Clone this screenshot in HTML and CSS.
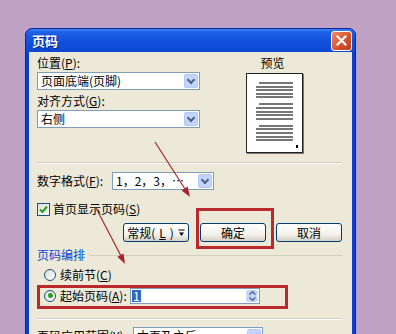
FILE: index.html
```html
<!DOCTYPE html>
<html>
  <head>
    <title>页码</title>
    <meta charset="utf-8">
    <link rel="stylesheet" href="styles.css">
  </head>
  <body>
    <div class="dialog">
      <div class="titlebar">
        <span class="title">页码</span>
        <span class="close">
          <svg width="11" height="11" viewBox="0 0 11 11"><path d="M1.5 1.5 L9.5 9.5 M9.5 1.5 L1.5 9.5" stroke="#fff" stroke-width="2.2" stroke-linecap="square"/></svg>
        </span>
      </div>
      <div class="body">
        <div class="top">
          <div class="fields">
            <div class="lbl">位置(<u>P</u>):</div>
            <div class="combo"><span class="val">页面底端(页脚)</span><i class="drop"></i></div>
            <div class="lbl gap">对齐方式(<u>G</u>):</div>
            <div class="combo"><span class="val">右侧</span><i class="drop"></i></div>
          </div>
          <div class="preview">
            <div class="pv-label">预览</div>
            <div class="page">
              <div class="para"><b class="first"></b><b></b><b></b><b></b><b></b></div>
              <div class="para"><b class="first"></b><b></b><b></b><b></b><b></b></div>
              <div class="para"><b class="first"></b><b></b><b></b><b></b><b></b></div>
              <i class="pnum"></i>
            </div>
          </div>
        </div>

        <div class="sep"></div>

        <div class="num-row">
          <span>数字格式(<u>F</u>):</span>
          <div class="combo"><span class="val">1，2，3，…</span><i class="drop"></i></div>
        </div>

        <div class="check-row">
          <span class="check">
            <svg width="9" height="9" viewBox="0 0 9 9"><path d="M1 4.5 L3.5 7 L8 1.5" fill="none" stroke="#21a121" stroke-width="2"/></svg>
          </span>
          <span>首页显示页码(<u>S</u>)</span>
        </div>

        <div class="buttons">
          <span class="btn first">常规(<u>L</u>)
            <svg width="7" height="8" viewBox="0 0 7 8"><path d="M0.5 1h6" stroke="#000"/><path d="M1 3.5h5l-2.5 3.5z" fill="#000"/></svg>
          </span>
          <span class="btn">确定</span>
          <span class="btn">取消</span>
        </div>

        <div class="group">页码编排</div>

        <div class="radio-row">
          <span class="radio"></span>
          <span>续前节(<u>C</u>)</span>
        </div>

        <div class="radio-row start">
          <span class="radio on"></span>
          <span class="start-lbl">起始页码(<u>A</u>):</span>
          <div class="spin">
            <span class="spin-val"><em>1</em></span>
            <span class="spin-btns">
              <i><svg width="7" height="4" viewBox="0 0 7 4"><path d="M0.5 3.5 L3.5 0.8 L6.5 3.5" fill="none" stroke="#4d6185" stroke-width="1.4"/></svg></i>
              <i><svg width="7" height="4" viewBox="0 0 7 4"><path d="M0.5 0.5 L3.5 3.2 L6.5 0.5" fill="none" stroke="#4d6185" stroke-width="1.4"/></svg></i>
            </span>
          </div>
        </div>

        <div class="sep low"></div>

        <div class="range-row">
          <span>页码应用范围(<u>Y</u>):</span>
          <div class="combo"><span class="val">本页及之后</span><i class="drop"></i></div>
        </div>
      </div>
    </div>

    <!-- annotations drawn over the dialog -->
    <div class="mark mark-ok"></div>
    <div class="mark mark-start"></div>
    <svg class="arrows" width="396" height="334" viewBox="0 0 396 334">
      <g stroke="#a8262a" stroke-width="1.2" fill="#a8262a">
        <line x1="155" y1="142" x2="185" y2="189"/>
        <polygon points="190,197 181.6,190.6 187.6,186.6" stroke="none"/>
        <line x1="96" y1="208" x2="121" y2="256"/>
        <polygon points="125,264 117.3,256.8 123.5,253.4" stroke="none"/>
      </g>
    </svg>
  </body>
</html>
```

FILE: styles.css
```css
* {
  box-sizing: border-box;
}
html, body {
  margin: 0;
}
body {
  position: relative;
  width: 396px;
  height: 334px;
  overflow: hidden;
  background: #bfa2c3;
  font-family: "Noto Sans CJK SC", "Liberation Sans", sans-serif;
  font-size: 12px;
  color: #000;
}
u {
  text-decoration: underline;
}

/* window frame */
.dialog {
  position: absolute;
  left: 25px;
  top: 28px;
  width: 331px;
  height: 330px;
  display: flex;
  flex-direction: column;
  background: #0b3dd0;
  border: 1px solid #0a2596;
  border-radius: 7px 7px 0 0;
  overflow: hidden;
}
.titlebar {
  display: flex;
  align-items: center;
  height: 23px;
  padding: 0 3px 0 6px;
  background: linear-gradient(#3f86f4 0, #1d60e6 3px, #1352dc 50%, #0c48d0 100%);
}
.title {
  color: #fff;
  font-weight: bold;
  font-size: 13px;
  letter-spacing: 0;
  text-shadow: 1px 1px 0 #0a2a8a;
}
.close {
  display: flex;
  align-items: center;
  justify-content: center;
  width: 21px;
  height: 20px;
  margin-left: auto;
  border: 1px solid #fff;
  border-radius: 3px;
  background: linear-gradient(135deg, #f08a62, #d4502c 60%, #b8401f);
}
.body {
  flex: 1;
  margin: 0 3px 0 3px;
  padding: 4px 10px 0 8px;
  background: #ece9d8;
  display: flex;
  flex-direction: column;
}

/* top part */
.top {
  display: flex;
}
.fields {
  width: 163px;
}
.lbl {
  height: 14px;
  line-height: 14px;
}
.lbl.gap {
  margin-top: 4px;
}
.combo {
  position: relative;
  display: flex;
  align-items: center;
  height: 18px;
  margin-top: 2px;
  padding-left: 3px;
  background: #fff;
  border: 1px solid #7f9db9;
  line-height: 14px;
  white-space: nowrap;
  overflow: hidden;
}
.drop {
  position: absolute;
  right: 1px;
  top: 1px;
  bottom: 1px;
  width: 14px;
  border-radius: 2px;
  background: #c3d5fc;
  border: 1px solid #b1c7f5;
}
.drop::after {
  content: "";
  position: absolute;
  left: 3px;
  top: 2px;
  width: 4px;
  height: 4px;
  border-right: 2px solid #4d6185;
  border-bottom: 2px solid #4d6185;
  transform: rotate(45deg);
}
.preview {
  margin-left: 46px;
  width: 59px;
}
.pv-label {
  height: 14px;
  line-height: 14px;
  padding-right: 6px;
  text-align: center;
}
.page {
  position: relative;
  width: 57px;
  height: 80px;
  margin-top: 3px;
  padding: 8px 9px 0 9px;
  background: #fff;
  border: 1px solid #222;
  box-shadow: 1px 1px 0 #777;
}
.para {
  display: flex;
  flex-direction: column;
  gap: 1.6px;
  margin-bottom: 5px;
}
.para b {
  display: block;
  height: 2px;
  background: #777;
}
.para b.first {
  margin-left: 3px;
}
.pnum {
  position: absolute;
  right: 4px;
  bottom: 4px;
  width: 2px;
  height: 3px;
  background: #000;
}

.sep {
  margin-top: 9px;
  height: 2px;
  border-top: 1px solid #d0cdbd;
  border-bottom: 1px solid #fff;
}
.sep.low {
  margin-top: 14px;
}

.num-row {
  display: grid;
  grid-template-columns: 75px 102px;
  align-items: center;
  margin-top: 8px;
  line-height: 14px;
}
.num-row .combo {
  margin-top: 0;
}

.check-row {
  display: flex;
  align-items: center;
  gap: 3px;
  height: 14px;
  margin-top: 12px;
  line-height: 14px;
}
.check {
  display: flex;
  align-items: center;
  justify-content: center;
  width: 13px;
  height: 13px;
  background: linear-gradient(135deg, #dcdcd7, #fff);
  border: 1px solid #1c5180;
}

.buttons {
  display: flex;
  justify-content: flex-end;
  gap: 10px;
  margin-top: 7px;
}
.btn {
  display: flex;
  align-items: center;
  justify-content: center;
  gap: 4px;
  width: 66px;
  height: 19px;
  border: 1px solid #003c74;
  border-radius: 3px;
  background: linear-gradient(#fff, #f3f2ec 60%, #d6d0c5);
  line-height: 14px;
}
.btn.first {
  margin-right: 1px;
}

.group {
  display: flex;
  align-items: center;
  gap: 4px;
  height: 14px;
  margin-top: 6px;
  line-height: 14px;
  color: #0046d5;
}
.group::after {
  content: "";
  flex: 1;
  border-top: 1px solid #d0d0bf;
}

.radio-row {
  display: flex;
  align-items: center;
  gap: 4px;
  height: 14px;
  margin-top: 6px;
  padding-left: 7px;
  line-height: 14px;
}
.radio {
  position: relative;
  width: 12px;
  height: 12px;
  border: 1px solid #1c5180;
  border-radius: 50%;
  background: linear-gradient(135deg, #dcdcd7, #fff);
}
.radio.on::after {
  content: "";
  position: absolute;
  left: 2.5px;
  top: 2.5px;
  width: 5px;
  height: 5px;
  border-radius: 50%;
  background: #21a121;
}
.radio-row.start {
  height: 17px;
  margin-top: 5px;
  gap: 0;
}
.start-lbl {
  width: 74px;
  padding-left: 4px;
}
.spin {
  display: flex;
  width: 130px;
  height: 16px;
  background: #fff;
  border: 1px solid #7f9db9;
}
.spin-val {
  flex: 1;
  display: flex;
  align-items: center;
  padding-left: 1px;
}
.spin-val em {
  font-style: normal;
  line-height: 12px;
  padding: 0 1px;
  background: #316ac5;
  color: #fff;
}
.spin-btns {
  display: flex;
  flex-direction: column;
  width: 13px;
  padding: 1px 1px 1px 0;
}
.spin-btns i {
  flex: 1;
  display: flex;
  align-items: center;
  justify-content: center;
  background: #c3d5fc;
  border-radius: 2px;
}

.range-row {
  display: grid;
  grid-template-columns: 96px 130px;
  align-items: center;
  margin-top: 7px;
  line-height: 14px;
}
.range-row .combo {
  margin-top: 0;
}

/* red annotation boxes and arrows */
.mark {
  position: absolute;
  border: 3px solid #b82a2c;
}
.mark-ok {
  left: 196px;
  top: 208px;
  width: 78px;
  height: 41px;
}
.mark-start {
  left: 37px;
  top: 285px;
  width: 251px;
  height: 24px;
}
.arrows {
  position: absolute;
  left: 0;
  top: 0;
  pointer-events: none;
}
```
